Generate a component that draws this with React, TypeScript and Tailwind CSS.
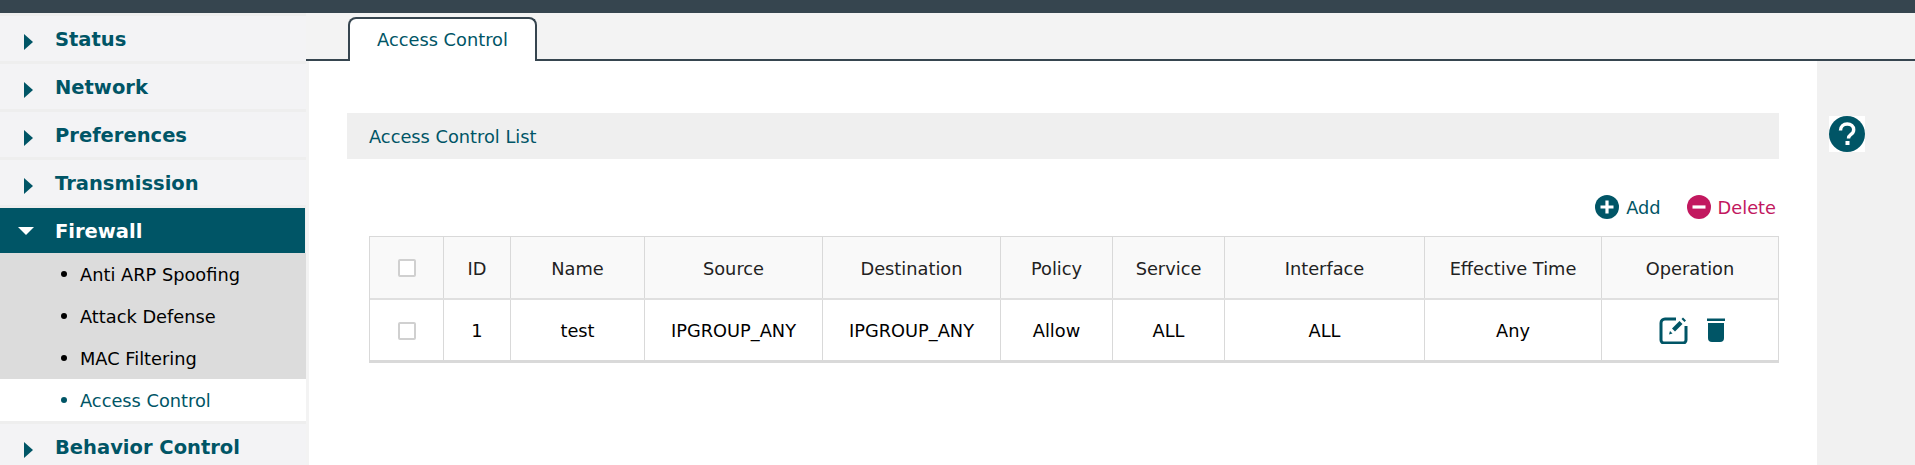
const navTop = ["Status", "Network", "Preferences", "Transmission"];
const subItems = ["Anti ARP Spoofing", "Attack Defense", "MAC Filtering"];
const columns = ["ID", "Name", "Source", "Destination", "Policy", "Service", "Interface", "Effective Time"];
const values = ["1", "test", "IPGROUP_ANY", "IPGROUP_ANY", "Allow", "ALL", "ALL", "Any"];
const gridCols = "grid grid-cols-[74px_67px_134px_178px_178px_112px_112px_200px_177px_1fr]";

function NavItem({ label }: { label: string }) {
  return (
    <div className="flex h-[45px] shrink-0 items-center bg-[#f3f3f5] pl-[24px] text-[#005566]">
      <span className="mt-[6px] h-0 w-0 border-y-[8px] border-l-[9px] border-y-transparent border-l-[#005566]" />
      <span className="mt-[3px] ml-[22px] text-[19.5px] leading-none font-bold">{label}</span>
    </div>
  );
}

function Checkbox() {
  return <span className="mt-[1px] block h-[18px] w-[18px] rounded-[2px] border-2 border-[#d0d0d0] bg-white" />;
}

function Sidebar() {
  return (
    <div className="flex w-[306px] shrink-0 flex-col gap-[3px] pt-[3px]">
      {navTop.map((n) => (
        <NavItem key={n} label={n} />
      ))}
      <div className="flex flex-col">
        <div className="flex h-[45px] w-[305px] items-center bg-[#005566] pl-[18px] text-white">
          <span className="h-0 w-0 border-x-[8px] border-t-[8px] border-x-transparent border-t-white" />
          <span className="mt-[3px] ml-[21px] text-[19.5px] leading-none font-bold">Firewall</span>
        </div>
        <div className="bg-[#dcdcdc]">
          {subItems.map((s) => (
            <div key={s} className="flex h-[42px] items-center pl-[61px] text-black">
              <span className="h-[6px] w-[6px] rounded-full bg-black" />
              <span className="mt-[2px] ml-[13px]">{s}</span>
            </div>
          ))}
        </div>
        <div className="flex h-[42px] items-center bg-white pl-[61px] text-[#005566]">
          <span className="h-[6px] w-[6px] rounded-full bg-[#005566]" />
          <span className="mt-[2px] ml-[13px]">Access Control</span>
        </div>
      </div>
      <NavItem label="Behavior Control" />
    </div>
  );
}

function AddIcon() {
  return (
    <svg width="24" height="24" viewBox="0 0 24 24">
      <circle cx="12" cy="12" r="12" fill="#005566" />
      <path d="M12 5.500v13M5.500 12h13" stroke="#fff" strokeWidth="3.200" />
    </svg>
  );
}

function DeleteIcon() {
  return (
    <svg width="24" height="24" viewBox="0 0 24 24">
      <circle cx="12" cy="12" r="12" fill="#c2185f" />
      <path d="M5.500 12h13" stroke="#fff" strokeWidth="3.200" />
    </svg>
  );
}

function EditIcon() {
  return (
    <svg width="29" height="28" viewBox="0 0 29 28" fill="none">
      <path d="M17 3H6a4 4 0 0 0-4 4v17a3 3 0 0 0 3 3h19a3 3 0 0 0 3-3V10" stroke="#005566" strokeWidth="3" />
      <path d="M13 12.500 20.500 5l3 3-7.500 7.500z" fill="#005566" />
      <path d="M22.500 3l1.500-1.500 3 3L25.500 6z" fill="#005566" />
      <path d="M11 15l2.500 2.500-3.500 1z" fill="#005566" />
    </svg>
  );
}

function TrashIcon() {
  return (
    <svg width="18" height="24" viewBox="0 0 18 24">
      <rect x="0" y="0.500" width="18" height="2.500" fill="#005566" />
      <path d="M1 5h16v15a4 4 0 0 1-4 4H5a4 4 0 0 1-4-4z" fill="#005566" />
    </svg>
  );
}

function HelpIcon() {
  return (
    <svg width="36" height="36" viewBox="0 0 36 36">
      <rect width="36" height="36" fill="#fff" />
      <circle cx="18" cy="18" r="18" fill="#005566" />
      <path d="M11.500 14.500c0-4 3-6.500 6.700-6.500 3.800 0 6.500 2.400 6.500 5.700 0 2.400-1.200 3.700-3 5-1.500 1.100-2.200 1.900-2.200 3.800" fill="none" stroke="#fff" strokeWidth="3.400" />
      <rect x="16.500" y="25" width="4" height="4" fill="#fff" />
    </svg>
  );
}

function Toolbar() {
  return (
    <div className="mt-[36px] flex h-[24px] items-center justify-end gap-[26px] pr-[3px]">
      <div className="flex items-center gap-[7px] text-[#005566]">
        <AddIcon />
        <span className="mt-[2px]">Add</span>
      </div>
      <div className="flex items-center gap-[7px] text-[#c2185f]">
        <DeleteIcon />
        <span className="mt-[2px]">Delete</span>
      </div>
    </div>
  );
}

function AclTable() {
  return (
    <div className="mt-[17px] ml-[22px] border border-b-[3px] border-[#d9d9d9] text-[#222]">
      <div className={`${gridCols} h-[63px] border-b-2 border-[#e0e0e0] bg-[#f9f9f9]`}>
        <div className="flex items-center justify-center border-r border-[#d9d9d9]">
          <Checkbox />
        </div>
        {columns.map((c) => (
          <div key={c} className="flex items-center justify-center border-r border-[#d9d9d9] pt-[3px]">
            {c}
          </div>
        ))}
        <div className="flex items-center justify-center pt-[3px]">Operation</div>
      </div>
      <div className={`${gridCols} h-[60px] bg-white`}>
        <div className="flex items-center justify-center border-r border-[#d9d9d9]">
          <Checkbox />
        </div>
        {values.map((v, i) => (
          <div key={i} className="flex items-center justify-center border-r border-[#d9d9d9] pt-[3px] text-black">
            {v}
          </div>
        ))}
        <div className="flex items-center justify-center gap-[19px] pl-[4px]">
          <EditIcon />
          <TrashIcon />
        </div>
      </div>
    </div>
  );
}

export default function App() {
  return (
    <div className="h-[465px] w-[1915px] overflow-hidden bg-white font-['DejaVu_Sans',sans-serif] text-[17.8px]">
      <div className="h-[13px] bg-[#36454f]" />
      <div className="flex h-[452px] bg-[#eeeeee]">
        <Sidebar />
        <div className="flex flex-1 flex-col bg-[#f3f3f3]">
          <div className="flex h-[48px] shrink-0 items-end border-b-2 border-[#36454f] pl-[42px]">
            <div className="-mb-[2px] flex h-[44px] w-[189px] items-center justify-center rounded-t-[8px] border-x-2 border-t-2 border-[#36454f] bg-white text-[#005566]">
              Access Control
            </div>
          </div>
          <div className="flex flex-1 pl-[3px]">
            <div className="w-[1508px] shrink-0 bg-white pt-[52px] pl-[38px] pr-[38px]">
              <div className="flex h-[46px] items-center bg-[#efefef] pt-[2px] pl-[22px] text-[#005566]">Access Control List</div>
              <Toolbar />
              <AclTable />
            </div>
            <div className="flex-1 bg-[#f1f1f1] pt-[55px] pl-[12px]">
              <HelpIcon />
            </div>
          </div>
        </div>
      </div>
    </div>
  );
}
